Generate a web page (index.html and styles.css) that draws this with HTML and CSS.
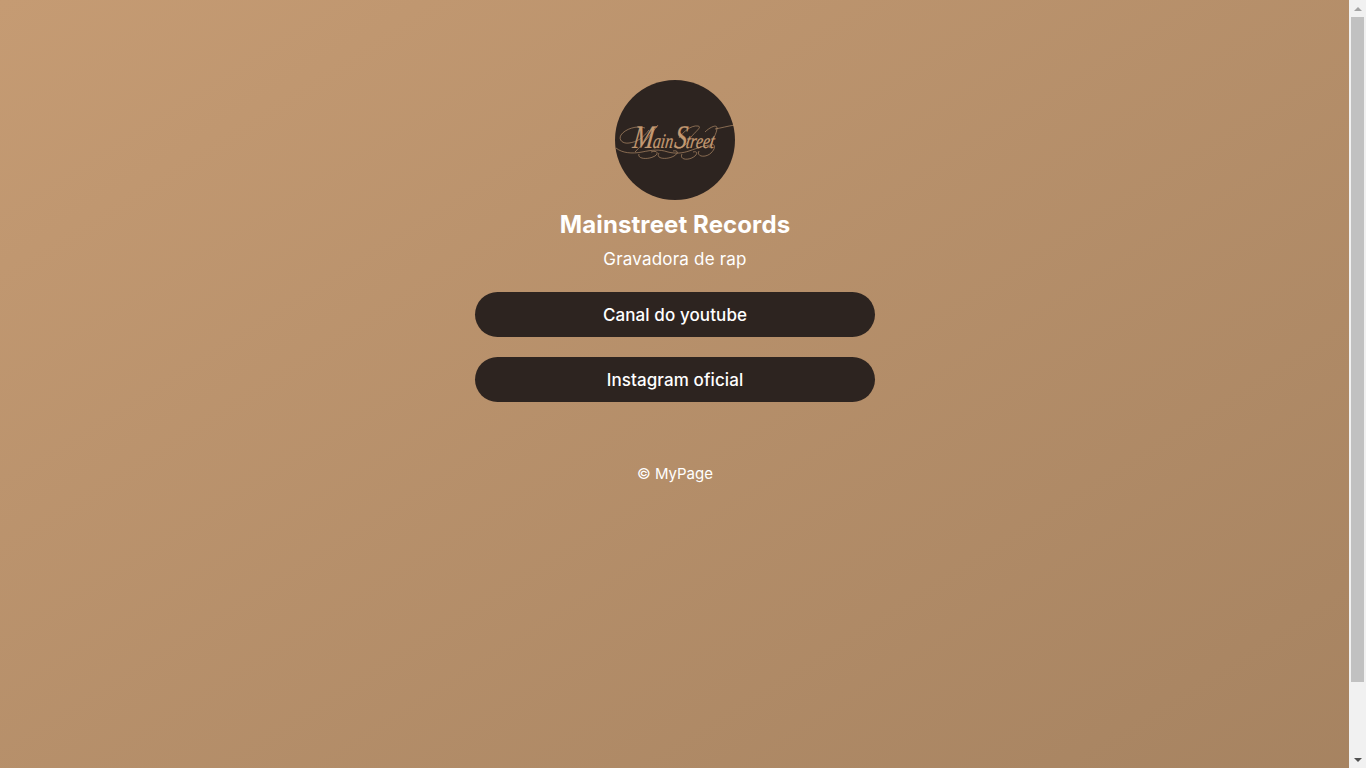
FILE: index.html
```html
<!DOCTYPE html>
<html lang="pt-BR">

<head>
    <meta charset="UTF-8">
    <meta name="viewport" content="width=device-width, initial-scale=1.0">
    <title>Mainstreet Records</title>
    <link rel="stylesheet" href="styles.css">
</head>

<body>
    <main class="page">
        <svg class="avatar" viewBox="0 0 120 120" role="img" aria-label="Main Street">
            <circle cx="60" cy="60" r="60" fill="#2d2420"></circle>
            <text class="avatar-text" transform="translate(17 68) scale(0.84 1.1) skewX(-10)"><tspan class="avatar-cap">M</tspan><tspan dx="-1">ain</tspan><tspan class="avatar-cap" dx="1">S</tspan><tspan dx="-1">treet</tspan></text>
            <g class="avatar-swash">
                <path d="M30 48c-8-3-20 1-24 7-3 5 2 9 8 8 8-1 14-5 20-13"></path>
                <path d="M43 45c-6 8-14 18-23 27"></path>
                <path d="M1 68c6 5 16 6 26 4 10-2 17-3 26 0 8 2 15 1 21-1 9-3 16-6 23-6"></path>
                <path d="M24 74c-2 5 9 6 16 2 4-3 2-6-4-4"></path>
                <path d="M44 73c-4 6 8 7 15 3 5-3 4-6-1-5"></path>
                <path d="M67 74c-3 6 7 7 13 2 3-3 2-5-2-4"></path>
                <path d="M84 71c-3 6 7 7 12 2 4-4 5-8 1-9"></path>
                <path d="M64 58c4-6 12-13 19-12 5 1-4 6-9 14-3 5-7 9-12 8"></path>
                <path d="M90 52c5-5 12-8 12-4 0 5-5 13-8 20"></path>
                <path d="M100 49c6-1 13-3 20-4"></path>
            </g>
        </svg>
        <h1 class="title">Mainstreet Records</h1>
        <p class="subtitle">Gravadora de rap</p>
        <nav class="links">
            <a class="link-btn" href="#">Canal do youtube</a>
            <a class="link-btn" href="#">Instagram oficial</a>
        </nav>
        <footer class="footer">© MyPage</footer>
    </main>

    <div class="scrollbar">
        <div class="scroll-btn"><span class="arrow-up"></span></div>
        <div class="scroll-track"><div class="scroll-thumb"></div></div>
        <div class="scroll-btn"><span class="arrow-down"></span></div>
    </div>
</body>

</html>
```

FILE: styles.css
```css
* {
    box-sizing: border-box;
}

body {
    margin: 0;
    height: 100vh;
    overflow: hidden;
    background: linear-gradient(to bottom right, #c59b73, #a58260) 0 0 / 1349px 848px no-repeat;
    color: #fff;
    font-family: "Inter", "Liberation Sans", sans-serif;
}

.page {
    width: 400px;
    margin-left: 475px;
    padding-top: 80px;
    display: flex;
    flex-direction: column;
    align-items: center;
}

.avatar {
    width: 120px;
    height: 120px;
    display: block;
}

.avatar-text {
    font-family: "Liberation Serif", serif;
    font-style: italic;
    font-size: 19px;
    fill: #c49a72;
    stroke: #c49a72;
    stroke-width: 0.2;
}

.avatar-cap {
    font-size: 30px;
}

.avatar-swash path {
    fill: none;
    stroke: #c49a72;
    stroke-width: 0.6;
}

.title {
    margin: 7px 0 0;
    font-size: 24px;
    line-height: 36px;
    font-weight: 700;
    letter-spacing: 0.1px;
}

.subtitle {
    margin: 4px 0 0;
    font-size: 17px;
    line-height: 24px;
    font-weight: 400;
    letter-spacing: 0.2px;
}

.links {
    width: 100%;
    margin-top: 21px;
    display: flex;
    flex-direction: column;
    gap: 20px;
}

.link-btn {
    height: 45px;
    border-radius: 25px;
    background-color: #2d2420;
    color: #fff;
    font-size: 17px;
    font-weight: 450;
    letter-spacing: 0.1px;
    text-decoration: none;
    display: flex;
    justify-content: center;
    align-items: center;
}

.footer {
    margin-top: 60px;
    font-size: 15px;
    line-height: 24px;
}

/* drawn scrollbar, sits over the right edge of the window */
.scrollbar {
    position: fixed;
    top: 0;
    right: 0;
    bottom: 0;
    width: 17px;
    background-color: #f1f1f1;
    display: flex;
    flex-direction: column;
}

.scroll-btn {
    height: 17px;
    display: flex;
    justify-content: center;
    align-items: center;
}

.arrow-up,
.arrow-down {
    width: 0;
    height: 0;
    border-left: 4px solid transparent;
    border-right: 4px solid transparent;
}

.arrow-up {
    border-bottom: 4px solid #a3a3a3;
}

.arrow-down {
    border-top: 4px solid #505050;
}

.scroll-track {
    flex: 1;
    padding: 0 2px;
}

.scroll-thumb {
    height: 665px;
    background-color: #c1c1c1;
}
```
